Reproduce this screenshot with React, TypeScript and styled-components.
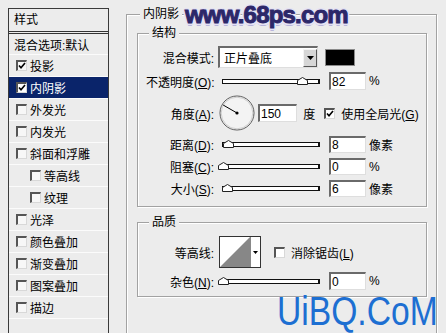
import React from 'react';
import styled, { createGlobalStyle } from 'styled-components';

const GlobalStyle = createGlobalStyle`
  html, body {
    margin: 0;
    padding: 0;
    background: #ececec;
  }
  body {
    font-family: "Liberation Sans", "Noto Sans CJK SC", sans-serif;
    font-size: 12px;
    color: #000;
  }
`;

const Window = styled.div`
  position: relative;
  width: 446px;
  height: 333px;
  overflow: hidden;
  box-sizing: border-box;
  padding: 7px 0 0 8px;
  display: flex;
  align-items: flex-start;
  gap: 17px;
`;

/* ---------- left style list ---------- */

const StyleList = styled.div`
  width: 101px;
  height: 340px;
  margin-top: 1px;
  box-sizing: border-box;
  border: 1px solid #3a3a3a;
  flex-shrink: 0;
`;

const ListHeader = styled.div`
  height: 22px;
  line-height: 22px;
  padding-left: 5px;
  border-bottom: 3px double #333;
`;

const ListRow = styled.div<{ $selected?: boolean; $indent?: boolean; $short?: boolean }>`
  height: ${({ $short }) => ($short ? '20px' : '21px')};
  display: flex;
  align-items: center;
  gap: 3px;
  padding-left: ${({ $indent, $short }) => ($short ? '5px' : $indent ? '21px' : '7px')};
  border-bottom: 1px solid #fbfbfb;
  background: ${({ $selected }) => ($selected ? '#0a246a' : 'transparent')};
  color: ${({ $selected }) => ($selected ? '#fff' : '#000')};
`;

const Box = styled.span<{ $light?: boolean }>`
  width: 11px;
  height: 11px;
  box-sizing: border-box;
  display: inline-flex;
  align-items: center;
  justify-content: center;
  flex-shrink: 0;
  background: ${({ $light }) => ($light ? '#fff' : '#f7f7f7')};
  border-top: 2px solid #555;
  border-left: 2px solid #555;
  border-right: 1px solid #d8d8d8;
  border-bottom: 1px solid #d8d8d8;
`;

const Check: React.FC<{ checked?: boolean; light?: boolean }> = ({ checked, light }) => (
  <Box $light={light}>
    {checked && (
      <svg width="8" height="8" viewBox="0 0 8 8">
        <path d="M1 3.5 L3 5.8 L7 1" fill="none" stroke="#000" strokeWidth="1.6" />
      </svg>
    )}
  </Box>
);

/* ---------- right panel ---------- */

const Group = styled.fieldset<{ $mt?: number; $pb?: number; $height?: number }>`
  margin: ${({ $mt }) => $mt ?? 0}px 0 0 0;
  padding: 0 8px ${({ $pb }) => $pb ?? 0}px 8px;
  border: 1px solid #a2a2a2;
  box-shadow: inset 1px 1px 0 #fff, 1px 1px 0 #fff;
  min-width: 0;
  ${({ $height }) => ($height ? `height: ${$height}px;` : '')}
`;

const OuterGroup = styled(Group)`
  width: 311px;
  box-sizing: border-box;
  padding: 0 9px 0 10px;
  flex-shrink: 0;
`;

const Legend = styled.legend`
  margin-left: 3px;
  padding: 0 3px;
  line-height: 14px;
  background: #ececec;
`;

const Row = styled.div<{ $mt: number; $h: number }>`
  display: flex;
  align-items: center;
  margin-top: ${({ $mt }) => $mt}px;
  height: ${({ $h }) => $h}px;
`;

const Label = styled.div`
  width: 68px;
  text-align: right;
  white-space: nowrap;
  flex-shrink: 0;
`;

const Gap = styled.span<{ $w: number }>`
  display: inline-block;
  width: ${({ $w }) => $w}px;
  flex-shrink: 0;
`;

const Sunken = styled.div<{ $w: number; $h?: number }>`
  width: ${({ $w }) => $w}px;
  height: ${({ $h }) => $h ?? 18}px;
  box-sizing: border-box;
  background: #fff;
  border-top: 2px solid #6a6a6a;
  border-left: 2px solid #6a6a6a;
  border-right: 1px solid #dedede;
  border-bottom: 1px solid #dedede;
  display: flex;
  align-items: center;
  padding-left: 1px;
  flex-shrink: 0;
  font-size: 12px;
`;

const Select = styled(Sunken)`
  padding-left: 4px;
  justify-content: space-between;
`;

const DropButton = styled.div`
  width: 14px;
  height: 18px;
  box-sizing: border-box;
  background: #d6d6d6;
  border-top: 1px solid #f4f4f4;
  border-left: 1px solid #f4f4f4;
  border-right: 1px solid #555;
  border-bottom: 1px solid #555;
  display: flex;
  align-items: center;
  justify-content: center;
`;

const Swatch = styled.div`
  width: 30px;
  height: 17px;
  box-sizing: border-box;
  background: #000;
  border: 1px solid #8a8a8a;
  flex-shrink: 0;
`;

const Track = styled.div`
  position: relative;
  width: 98px;
  height: 5px;
  box-sizing: border-box;
  border: 1px solid #111;
  border-right-width: 2px;
  background: #fff;
  flex-shrink: 0;
`;

const Thumb = styled.svg`
  position: absolute;
  top: -3px;
`;

const Slider: React.FC<{ value: number }> = ({ value }) => (
  <Track>
    <Thumb width="11" height="8" viewBox="0 0 11 8" style={{ left: Math.round(value * 96) - 5 }}>
      <path d="M0.5 7.5 V3.5 L5.5 0.5 L10.5 3.5 V7.5 Z" fill="#fff" stroke="#222" />
    </Thumb>
  </Track>
);

const Dial = styled.svg`
  flex-shrink: 0;
`;

const Contour = styled.div`
  width: 42px;
  height: 32px;
  box-sizing: border-box;
  border: 1px solid #333;
  display: flex;
  background: #fff;
  flex-shrink: 0;
`;

const ContourArrow = styled.div`
  flex: 1;
  border-left: 1px solid #888;
  display: flex;
  align-items: center;
  justify-content: center;
`;

const Unit = styled.span`
  margin-left: 3px;
  white-space: nowrap;
`;

const Text = styled.span`
  white-space: nowrap;
`;

const Watermark = styled.div`
  position: absolute;
  left: 185px;
  top: 1px;
  font-family: "Liberation Sans", sans-serif;
  font-weight: 700;
  font-size: 24px;
  letter-spacing: -0.8px;
  color: #2c2769;
  -webkit-text-stroke: 1px #2c2769;
  text-shadow: -2px 0 #e4e2f4, 2px 0 #e4e2f4, 0 -2px #e4e2f4, 0 2px #e4e2f4,
    -1.5px -1.5px #e4e2f4, 1.5px 1.5px #e4e2f4, -1.5px 1.5px #e4e2f4, 1.5px -1.5px #e4e2f4,
    0 3px #b8b4dc;
`;

const Watermark2 = styled.div`
  position: absolute;
  left: 277px;
  top: 291px;
  font-family: "Liberation Sans", sans-serif;
  font-size: 41px;
  line-height: 41px;
  color: #1d6fd2;
  transform: scaleX(0.82);
  transform-origin: left top;
  white-space: nowrap;
`;

const Arrow = () => (
  <svg width="7" height="4" viewBox="0 0 7 4">
    <path d="M0 0 H7 L3.5 4 Z" fill="#000" />
  </svg>
);

const styles = [
  { label: '投影', checked: true },
  { label: '内阴影', checked: true, selected: true },
  { label: '外发光' },
  { label: '内发光' },
  { label: '斜面和浮雕' },
  { label: '等高线', indent: true },
  { label: '纹理', indent: true },
  { label: '光泽' },
  { label: '颜色叠加' },
  { label: '渐变叠加' },
  { label: '图案叠加' },
  { label: '描边' },
];

const App: React.FC = () => {
  const angle = (150 * Math.PI) / 180;
  const lx = 18 + Math.cos(angle) * 16;
  const ly = 18 - Math.sin(angle) * 16;

  return (
    <Window>
      <GlobalStyle />
      <StyleList>
        <ListHeader>样式</ListHeader>
        <ListRow $short>混合选项:默认</ListRow>
        {styles.map((s) => (
          <ListRow key={s.label} $selected={s.selected} $indent={s.indent}>
            <Check checked={s.checked} light={s.selected} />
            {s.label}
          </ListRow>
        ))}
        <ListRow />
      </StyleList>

      <OuterGroup $height={340}>
        <Legend>内阴影</Legend>
        <Group $mt={5} $pb={9}>
          <Legend>结构</Legend>
          <Row $mt={6} $h={22}>
            <Label>混合模式:</Label>
            <Gap $w={4} />
            <Select $w={100} $h={22}>
              <Text>正片叠底</Text>
              <DropButton>
                <Arrow />
              </DropButton>
            </Select>
            <Gap $w={7} />
            <Swatch />
          </Row>
          <Row $mt={4} $h={18}>
            <Label>
              不透明度(<u>O</u>):
            </Label>
            <Gap $w={8} />
            <Slider value={0.82} />
            <Gap $w={9} />
            <Sunken $w={37}>82</Sunken>
            <Unit>%</Unit>
          </Row>
          <Row $mt={5} $h={36}>
            <Label>
              角度(<u>A</u>):
            </Label>
            <Gap $w={5} />
            <Dial width="36" height="36" viewBox="0 0 36 36">
              <circle cx="18" cy="18" r="17" fill="#f3f3f3" stroke="#5c5c5c" />
              <circle cx="18" cy="18" r="15.8" fill="none" stroke="#d0d0d0" />
              <line x1="18" y1="18" x2={lx} y2={ly} stroke="#000" strokeWidth="1" />
              <circle cx="18" cy="18" r="1.6" fill="#000" />
            </Dial>
            <Gap $w={3} />
            <Sunken $w={39}>150</Sunken>
            <Unit>&nbsp;度</Unit>
            <Gap $w={9} />
            <Check checked light />
            <Gap $w={6} />
            <Text>
              使用全局光(<u>G</u>)
            </Text>
          </Row>
          <Row $mt={5} $h={17}>
            <Label>
              距离(<u>D</u>):
            </Label>
            <Gap $w={8} />
            <Slider value={0.05} />
            <Gap $w={9} />
            <Sunken $w={37} $h={17}>8</Sunken>
            <Unit>像素</Unit>
          </Row>
          <Row $mt={5} $h={17}>
            <Label>
              阻塞(<u>C</u>):
            </Label>
            <Gap $w={8} />
            <Slider value={0} />
            <Gap $w={9} />
            <Sunken $w={37} $h={17}>0</Sunken>
            <Unit>%</Unit>
          </Row>
          <Row $mt={5} $h={17}>
            <Label>
              大小(<u>S</u>):
            </Label>
            <Gap $w={8} />
            <Slider value={0.04} />
            <Gap $w={9} />
            <Sunken $w={37} $h={17}>6</Sunken>
            <Unit>像素</Unit>
          </Row>
        </Group>

        <Group $mt={8} $pb={6}>
          <Legend>品质</Legend>
          <Row $mt={7} $h={32}>
            <Label>等高线:</Label>
            <Gap $w={5} />
            <Contour>
              <svg width="30" height="30" viewBox="0 0 30 30">
                <polygon points="0,30 30,0 30,30" fill="#878787" />
              </svg>
              <ContourArrow>
                <svg width="5" height="3" viewBox="0 0 5 3">
                  <path d="M0 0 H5 L2.5 3 Z" fill="#000" />
                </svg>
              </ContourArrow>
            </Contour>
            <Gap $w={13} />
            <Check light />
            <Gap $w={6} />
            <Text>
              消除锯齿(<u>L</u>)
            </Text>
          </Row>
          <Row $mt={4} $h={18}>
            <Label>
              杂色(<u>N</u>):
            </Label>
            <Gap $w={8} />
            <Slider value={0} />
            <Gap $w={9} />
            <Sunken $w={37}>0</Sunken>
            <Unit>%</Unit>
          </Row>
        </Group>
      </OuterGroup>

      <Watermark>www.68ps.com</Watermark>
      <Watermark2>UiBQ.CoM</Watermark2>
    </Window>
  );
};

export default App;
